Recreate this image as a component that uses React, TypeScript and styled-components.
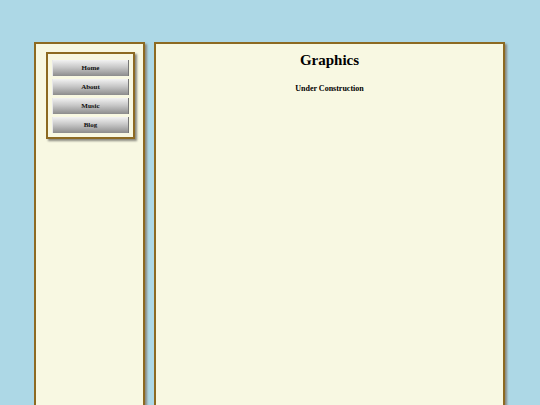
import React from 'react';
import styled, { createGlobalStyle } from 'styled-components';

const GlobalStyle = createGlobalStyle`
  html, body {
    margin: 0;
    padding: 0;
    background: #add8e6;
    overflow: hidden;
    font-family: "Liberation Serif", "Times New Roman", serif;
  }
`;

const Page = styled.div`
  display: flex;
  justify-content: center;
  gap: 9px;
  padding: 42px 1px 0 0;
  height: 405px;
  box-sizing: border-box;
  overflow: hidden;
`;

const Panel = styled.div<{ width: number }>`
  flex: none;
  width: ${(p) => p.width}px;
  height: 380px;
  box-sizing: border-box;
  background: #f8f8e2;
  border: 2px solid #8d6a22;
  border-bottom: none;
  box-shadow: 2px 2px 2px #8a8a80;
`;

const Sidebar = styled(Panel)`
  padding: 8px 8px 8px 10px;
`;

const NavBox = styled.nav`
  display: flex;
  flex-direction: column;
  gap: 3px;
  padding: 6px 4px 4px 4px;
  background: #f8f8e2;
  border: 2px solid #8d6a22;
  box-shadow: 2px 2px 2px #8a8a80;
`;

const NavButton = styled.a`
  display: flex;
  align-items: center;
  justify-content: center;
  height: 16px;
  background: linear-gradient(to bottom, #f2f2f2 0%, #c8c8c8 45%, #8c8c8c 100%);
  border-left: 1px solid #e8e8e8;
  border-right: 1px solid #777;
  font-size: 7px;
  font-weight: bold;
  color: #111;
  text-decoration: none;
  cursor: pointer;
`;

const Content = styled(Panel)`
  padding-top: 8px;
  text-align: center;
`;

const Title = styled.h1`
  margin: 0;
  font-size: 15px;
  font-weight: bold;
  color: #000;
`;

const Notice = styled.p`
  margin: 15px 0 0;
  font-size: 8px;
  font-weight: bold;
  color: #000;
`;

const links = ['Home', 'About', 'Music', 'Blog'];

export default function App() {
  return (
    <>
      <GlobalStyle />
      <Page>
        <Sidebar width={111}>
          <NavBox>
            {links.map((l) => (
              <NavButton key={l}>{l}</NavButton>
            ))}
          </NavBox>
        </Sidebar>
        <Content width={351}>
          <Title>Graphics</Title>
          <Notice>Under Construction</Notice>
        </Content>
      </Page>
    </>
  );
}
